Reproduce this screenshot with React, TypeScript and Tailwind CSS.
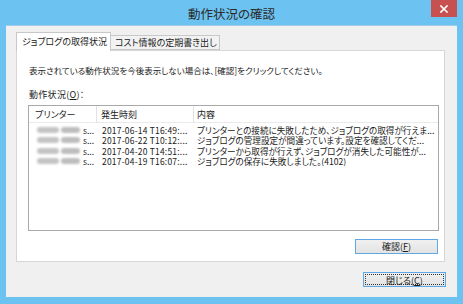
import React from "react";

interface Row {
  id: number;
  time: string;
  content: string;
}

const rows: Row[] = [
  {
    id: 1,
    time: "2017-06-14 T16:49:...",
    content: "プリンターとの接続に失敗したため、ジョブログの取得が行えま...",
  },
  {
    id: 2,
    time: "2017-06-22 T10:12:...",
    content: "ジョブログの管理設定が間違っています。設定を確認してくだ...",
  },
  {
    id: 3,
    time: "2017-04-20 T14:51:...",
    content: "プリンターから取得が行えず、ジョブログが消失した可能性が...",
  },
  {
    id: 4,
    time: "2017-04-19 T16:07:...",
    content: "ジョブログの保存に失敗しました。(4102)",
  },
];

const font =
  "font-['Meiryo_UI','Noto_Sans_CJK_JP',sans-serif] [font-feature-settings:'palt']";

const App: React.FC = () => {
  return (
    <div
      className={`w-[463px] h-[304px] bg-[#6cc2f0] flex flex-col text-[#1a1a1a] ${font}`}
    >
      {/* Title bar */}
      <div className="h-[25px] grid grid-cols-[1fr_auto_1fr] shrink-0">
        <div />
        <div className="text-[12.5px] leading-[25px] text-[#2b2b2b] pt-[1px]">
          動作状況の確認
        </div>
        <div className="flex justify-end pr-[6px]">
          <div className="w-[26px] h-[17px] bg-[#c75050] flex items-center justify-center">
            <svg width="8" height="8" viewBox="0 0 8 8">
              <path
                d="M1 1 L7 7 M7 1 L1 7"
                stroke="#fff"
                strokeWidth="1.6"
                strokeLinecap="square"
              />
            </svg>
          </div>
        </div>
      </div>

      {/* Client area */}
      <div className="flex-1 mx-[6px] mb-[7px] bg-[#f0f0f0] border-t border-[#9fcbe6] flex flex-col pt-[7px] pl-[10px] pr-[12px]">
        {/* Tabs */}
        <div className="flex items-end h-[18px] relative z-10 -mb-[1px]">
          <div className="w-[95px] h-[19px] bg-white border border-b-0 border-[#c8c8c8] text-[9px] leading-[17px] pl-[5px]">
            ジョブログの取得状況
          </div>
          <div className="w-[109px] h-[15px] bg-[#f2f2f2] border border-l-0 border-[#c8c8c8] text-[9px] leading-[14px] pl-[4px] mb-[1px]">
            コスト情報の定期書き出し
          </div>
        </div>

        {/* Panel */}
        <div className="h-[212px] bg-white border border-[#d6d6d6] flex flex-col pl-[11px] pr-[5px]">
          <div className="text-[8.5px] leading-[12px] mt-[13px] pl-[1px]">
            表示されている動作状況を今後表示しない場合は、[確認]をクリックしてください。
          </div>
          <div className="text-[9px] leading-[12px] mt-[13px] pl-[1px] tracking-[0.3px]">
            動作状況(<u>O</u>)：
          </div>

          {/* List */}
          <div className="mt-[4px] h-[126px] border border-[#a9a9a9] bg-white flex flex-col">
            <div className="grid grid-cols-[68px_97px_1fr] h-[17px] border-b border-[#eaeaea] text-[9px] leading-[17px]">
              <div className="pl-[6px] border-r border-[#e2e2e2]">プリンター</div>
              <div className="pl-[4px] border-r border-[#e2e2e2]">発生時刻</div>
              <div className="pl-[3px]">内容</div>
            </div>
            <div className="pt-[2px]">
              {rows.map((r) => (
                <div
                  key={r.id}
                  className="grid grid-cols-[68px_97px_1fr] h-[10.3px] leading-[10px] whitespace-nowrap"
                >
                  <div className="pl-[8px] flex items-center gap-[3px] overflow-hidden">
                    <div className="flex items-center gap-[2px] blur-[1.2px]">
                      <span className="w-[22px] h-[6px] bg-[#c4c4c4] rounded-sm" />
                      <span className="w-[19px] h-[6px] bg-[#bdbdbd] rounded-sm" />
                    </div>
                    <span className="text-[8.5px]">s...</span>
                  </div>
                  <div className="pl-[5px] text-[8.5px] tracking-[0.2px]">{r.time}</div>
                  <div className="pl-[3px] overflow-hidden text-[8.6px]">{r.content}</div>
                </div>
              ))}
            </div>
          </div>

          <div className="flex justify-end mt-[8px] pr-[1px]">
            <button className="w-[83px] h-[15px] border border-[#5fa8e6] bg-gradient-to-b from-[#f0f0f0] to-[#e3e3e3] text-[9px] leading-[13px]">
              確認(<u>F</u>)
            </button>
          </div>
        </div>

        {/* Bottom */}
        <div className="flex justify-end mt-[10px] -mr-[1px]">
          <button className="w-[83px] h-[15px] border border-[#5fa8e6] bg-gradient-to-b from-[#f0f0f0] to-[#e3e3e3] p-[1px]">
            <div className="h-full border border-dotted border-[#333] text-[9px] leading-[11px]">
              閉じる(<u>C</u>)
            </div>
          </button>
        </div>
      </div>
    </div>
  );
};

export default App;
